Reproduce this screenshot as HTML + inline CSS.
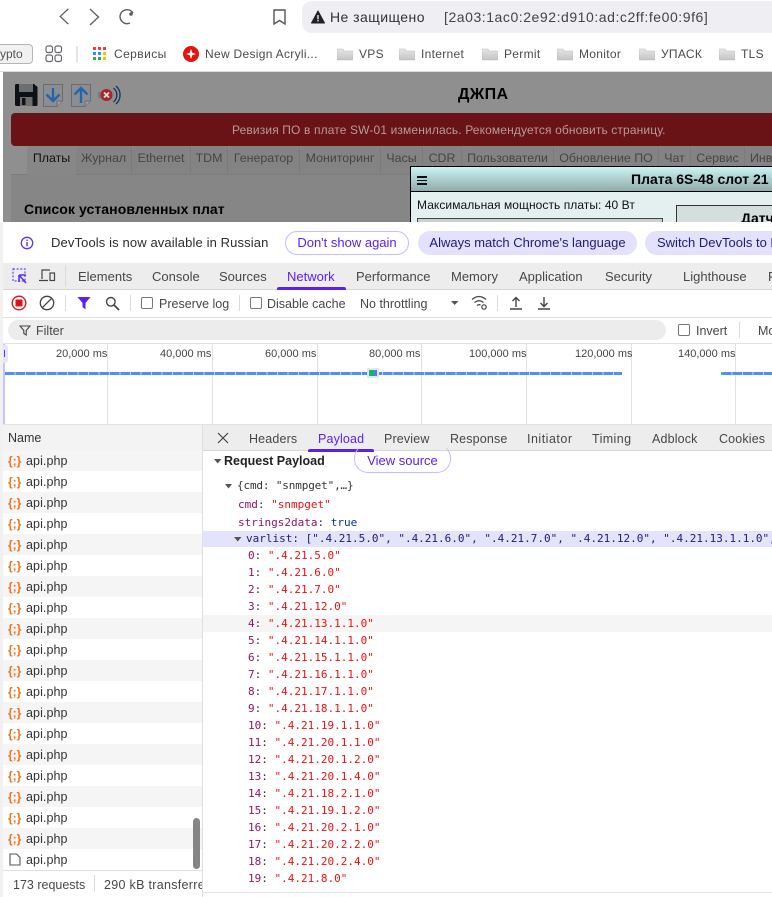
<!DOCTYPE html>
<html><head><meta charset="utf-8">
<style>
html,body{margin:0;padding:0;background:#fff}
body{position:relative;width:772px;height:897px;overflow:hidden;font-family:"Liberation Sans","Noto Sans CJK SC",sans-serif;font-size:12px;color:#333}
div,span,svg{position:absolute}
.t{white-space:nowrap;line-height:16px}
.b{font-size:12px;color:#4a4a4a;letter-spacing:.3px}
.dt{font-size:12.5px;color:#474747}
.dm{font-size:13px;color:#474747}
.dd{font-size:12.5px;color:#474747;letter-spacing:.15px}
.ms{font-size:11px;color:#444}
.tab{top:146px;height:28px;border-right:1px solid #7b7b7b;line-height:25px;color:#454545;text-align:center;background:#838383;border-top-left-radius:3px;font-size:12.4px}
.name{left:26px;font-size:12.5px;color:#333;white-space:nowrap;line-height:16px;letter-spacing:.08px}
.m{font-family:"DejaVu Sans Mono","Liberation Mono",monospace;font-size:11px;white-space:pre;line-height:14px}
.m span{position:static}
.k{color:#94125f}.s{color:#f01010}.c{color:#333}
.row{left:3px;width:199px;height:21px}
.i{left:8px;width:15px;height:12px;color:#f0731b;font-size:12px;font-weight:bold;line-height:12px;white-space:pre}
</style></head><body>

<!-- browser toolbar -->
<svg style="left:55px;top:6px" width="90" height="22" fill="none" stroke="#5f6368" stroke-width="1.4">
<path d="M14 3 L5.5 11 L14 19" transform="scale(.95)"/>
<path d="M35 3 L43.5 11 L35 19"/>
<path d="M78 7 A7 7 0 1 0 75 17" stroke="#5a5a5e"/>
<circle cx="76" cy="8" r="1.8" fill="#5a5a5e" stroke="none"/>
</svg>
<svg style="left:272px;top:8px" width="15" height="18" fill="none" stroke="#55565a" stroke-width="1.4"><path d="M2 2h11v14l-5.5-3.5L2 16z"/></svg>
<div style="left:302px;top:1px;width:480px;height:32px;background:#eeeef3;border-radius:10px 0 0 10px"></div>
<svg style="left:311px;top:10px" width="14" height="14"><path d="M7 1L13.500 13H0.500Z" fill="#222" stroke="#222" stroke-linejoin="round"/><rect x="6.300" y="5" width="1.400" height="4.300" fill="#eee"/><rect x="6.300" y="10" width="1.400" height="1.400" fill="#eee"/></svg>
<div class="t" style="left:330px;top:9px;font-size:14px;color:#333;letter-spacing:.45px">Не защищено</div>
<div class="t" style="left:444px;top:9px;font-size:14px;color:#444;letter-spacing:.55px">[2a03:1ac0:2e92:d910:ad:c2ff:fe00:9f6]</div>

<!-- bookmarks -->
<div style="left:-20px;top:44px;width:51px;height:18px;border:1px solid #b5b5b5;border-radius:4px;background:#f1f1f1"></div>
<div class="t" style="left:0;top:46px;color:#555;font-size:12px;width:22px;text-align:right">ypto</div>
<svg style="left:45px;top:45px" width="18" height="18" fill="none" stroke="#66676b" stroke-width="1.200"><rect x="1" y="1" width="6.500" height="6.500" rx="2"/><rect x="10" y="1" width="6.500" height="6.500" rx="2"/><rect x="1" y="10" width="6.500" height="6.500" rx="2"/><rect x="10" y="10" width="6.500" height="6.500" rx="2"/></svg>
<div style="left:76px;top:46px;width:2px;height:16px;background:#e3e3e8"></div>
<svg style="left:93px;top:47px" width="14" height="14"><rect x="0" y="0" width="3" height="3" fill="#ea4335"/><rect x="5" y="0" width="3" height="3" fill="#ea4335"/><rect x="10" y="0" width="3" height="3" fill="#ea4335"/><rect x="0" y="5" width="3" height="3" fill="#4285f4"/><rect x="5" y="5" width="3" height="3" fill="#4285f4"/><rect x="10" y="5" width="3" height="3" fill="#fbbc04"/><rect x="0" y="10" width="3" height="3" fill="#34a853"/><rect x="5" y="10" width="3" height="3" fill="#34a853"/><rect x="10" y="10" width="3" height="3" fill="#fbbc04"/></svg>
<div class="t b" style="left:114px;top:46px;letter-spacing:.42px">Сервисы</div>
<svg style="left:183px;top:46px" width="16" height="16"><circle cx="8" cy="8" r="8" fill="#e5120f"/><path d="M8 3 L9.300 6.700 L13 8 L9.300 9.300 L8 13 L6.700 9.300 L3 8 L6.700 6.700Z" fill="#fff"/></svg>
<div class="t b" style="left:205px;top:46px">New Design Acryli...</div>
<svg width="0" height="0" style="left:0;top:0"><defs><linearGradient id="fg" x1="0" y1="0" x2="0" y2="1"><stop offset="0" stop-color="#e6e6e6"/><stop offset="1" stop-color="#c4c4c4"/></linearGradient></defs></svg>
<svg style="left:337px;top:47px" width="16" height="14"><path d="M0 2h6l1 2h9v9H0z" fill="url(#fg)" stroke="#bbb" stroke-width=".6"/></svg>
<div class="t b" style="left:359px;top:46px">VPS</div>
<svg style="left:399px;top:47px" width="16" height="14"><path d="M0 2h6l1 2h9v9H0z" fill="url(#fg)" stroke="#bbb" stroke-width=".6"/></svg>
<div class="t b" style="left:421px;top:46px">Internet</div>
<svg style="left:482px;top:47px" width="16" height="14"><path d="M0 2h6l1 2h9v9H0z" fill="url(#fg)" stroke="#bbb" stroke-width=".6"/></svg>
<div class="t b" style="left:504px;top:46px">Permit</div>
<svg style="left:557px;top:47px" width="16" height="14"><path d="M0 2h6l1 2h9v9H0z" fill="url(#fg)" stroke="#bbb" stroke-width=".6"/></svg>
<div class="t b" style="left:579px;top:46px">Monitor</div>
<svg style="left:639px;top:47px" width="16" height="14"><path d="M0 2h6l1 2h9v9H0z" fill="url(#fg)" stroke="#bbb" stroke-width=".6"/></svg>
<div class="t b" style="left:661px;top:46px">УПАСК</div>
<svg style="left:719px;top:47px" width="16" height="14"><path d="M0 2h6l1 2h9v9H0z" fill="url(#fg)" stroke="#bbb" stroke-width=".6"/></svg>
<div class="t b" style="left:741px;top:46px">TLS</div>
<div style="left:0;top:71px;width:772px;height:1px;background:#dcdcdc"></div>

<!-- dimmed page -->
<div style="left:3px;top:72px;width:769px;height:150px;background:#8f8f8f;overflow:hidden"></div>
<svg style="left:15px;top:84px" width="23" height="22"><path d="M0 1.500Q0 0 1.500 0H19L22.500 3V20.500Q22.500 22 21 22H1.500Q0 22 0 20.500Z" fill="#0d1014"/><rect x="4" y="0" width="14" height="8" fill="#6c6f72"/><rect x="5" y="13" width="12.500" height="9" fill="#6e6e6e"/><rect x="7" y="14" width="3.500" height="7" fill="#111"/></svg>
<svg style="left:43px;top:84px" width="20" height="23"><path d="M.5 .5H19.500V17L14 22.500H.5Z" fill="#8a8e94" stroke="#6c6c6c"/><path d="M14 22.500V17H19.500" fill="#9c9c9c" stroke="#6c6c6c"/><path d="M10 4V17M3.500 10.500L10 17L16.500 10.500" fill="none" stroke="#2465a8" stroke-width="2.400"/></svg>
<svg style="left:71px;top:84px" width="20" height="23"><path d="M.5 .5H19.500V17L14 22.500H.5Z" fill="#8a8e94" stroke="#6c6c6c"/><path d="M14 22.500V17H19.500" fill="#9c9c9c" stroke="#6c6c6c"/><path d="M10 19V4M3.500 10.500L10 4L16.500 10.500" fill="none" stroke="#2465a8" stroke-width="2.400"/></svg>
<svg style="left:97px;top:84px" width="24" height="22"><path d="M1 8h4l3-3v12l-3-3H1z" fill="#7a7a7a"/><circle cx="9.500" cy="11" r="6" fill="#a5262b"/><path d="M7 8.500l5 5M12 8.500l-5 5" stroke="#ddd" stroke-width="1.800"/><path d="M16.500 4a9 9 0 0 1 0 14M19 2a12 12 0 0 1 0 18" fill="none" stroke="#17365c" stroke-width="1.300"/></svg>
<div class="t" style="left:458px;top:87px;font-size:16px;font-weight:bold;color:#000;letter-spacing:.4px">ДЖПА</div>
<div style="left:11px;top:113px;width:761px;height:33px;background:#691316;border-radius:4px 0 0 4px"></div>
<div class="t" style="left:232px;top:122px;color:#b69a9b;letter-spacing:.13px">Ревизия ПО в плате SW-01 изменилась. Рекомендуется обновить страницу.</div>

<div style="left:11px;top:174px;width:761px;height:48px;background:#868686;border-top:1px solid #7c7c7c;box-sizing:border-box"></div>
<div class="tab" style="left:27px;width:49px;color:#111;background:#878787;border-right:0;height:29px;z-index:1">Платы</div>
<div class="tab" style="left:76px;width:55px">Журнал</div>
<div class="tab" style="left:132px;width:58px">Ethernet</div>
<div class="tab" style="left:191px;width:36px">TDM</div>
<div class="tab" style="left:228px;width:71px">Генератор</div>
<div class="tab" style="left:300px;width:80px">Мониторинг</div>
<div class="tab" style="left:381px;width:41px">Часы</div>
<div class="tab" style="left:423px;width:38px">CDR</div>
<div class="tab" style="left:462px;width:91px">Пользователи</div>
<div class="tab" style="left:554px;width:104px">Обновление ПО</div>
<div class="tab" style="left:659px;width:31px">Чат</div>
<div class="tab" style="left:691px;width:53px">Сервис</div>
<div class="tab" style="left:745px;width:27px;border:0;text-align:left;padding-left:5px;box-sizing:border-box;overflow:hidden">Инв</div>
<div class="t" style="left:24px;top:201px;font-size:14px;font-weight:bold;color:#000;letter-spacing:.08px">Список установленных плат</div>

<!-- dialog -->
<div style="left:410px;top:166px;width:362px;height:56px;background:#e4f0f0;border:1px solid #000;border-right:0;border-bottom:0;box-sizing:border-box"></div>
<div style="left:411px;top:167px;width:361px;height:24px;background:linear-gradient(#cbf4f3,#8fabaa);border-bottom:1px solid #000"></div>
<div style="left:417px;top:176px;width:9.500px;height:1.500px;background:#111"></div>
<div style="left:417px;top:179.500px;width:9.500px;height:1.500px;background:#111"></div>
<div style="left:417px;top:183px;width:9.500px;height:1.500px;background:#111"></div>
<div class="t" style="left:631px;top:171px;font-size:14px;font-weight:bold;color:#000">Плата 6S-48 слот 21</div>
<div class="t" style="left:417px;top:197px;color:#111;letter-spacing:.06px">Максимальная мощность платы: 40 Вт</div>
<div style="left:417px;top:218px;width:246px;height:4px;background:#c5d0cf;border:1px solid #444;border-bottom:0;box-sizing:border-box"></div>
<div style="left:676px;top:205px;width:96px;height:17px;background:#d4dedd;border:1px solid #333;border-right:0;border-bottom:0;box-sizing:border-box"></div>
<div class="t" style="left:741px;top:210px;font-size:14px;font-weight:bold;color:#000">Датч</div>

<!-- infobar -->
<div style="left:0;top:222px;width:772px;height:41px;background:#fff"></div>
<svg style="left:20px;top:236px" width="14" height="14" fill="none"><circle cx="7" cy="7" r="5.700" stroke="#5b33e8" stroke-width="1.300"/><rect x="6.300" y="6" width="1.400" height="4.300" fill="#5b33e8"/><rect x="6.300" y="3.600" width="1.400" height="1.400" fill="#5b33e8"/></svg>
<div class="t" style="left:51px;top:235px;font-size:13px;color:#2c2c2c;letter-spacing:.12px">DevTools is now available in Russian</div>
<div style="left:285px;top:231px;width:122px;height:22px;border:1px solid #c6bcff;border-radius:12px"></div>
<div class="t" style="left:285px;top:235px;width:124px;text-align:center;font-size:13px;color:#5b20f0">Don't show again</div>
<div style="left:418px;top:231px;width:219px;height:24px;background:#e3e1fd;border-radius:12px"></div>
<div class="t" style="left:418px;top:235px;width:219px;text-align:center;font-size:13px;color:#1f1a78">Always match Chrome's language</div>
<div style="left:645px;top:231px;width:160px;height:24px;background:#e3e1fd;border-radius:12px"></div>
<div class="t" style="left:657px;top:235px;font-size:13px;color:#1f1a78">Switch DevTools to R</div>

<!-- devtools tabs -->
<div style="left:3px;top:263px;width:769px;height:27px;background:#ededee;border-bottom:1px solid #d6d6d6;box-sizing:border-box"></div>
<svg style="left:12px;top:268px" width="16" height="17" fill="none"><rect x="1" y="1" width="12" height="12" stroke="#6a48ea" stroke-width="1.200" stroke-dasharray="2 1.600"/><path d="M7 7h7M7 7v7M7 7l7 8" stroke="#5b33e8" stroke-width="1.600"/></svg>
<svg style="left:39px;top:269px" width="17" height="14" fill="none" stroke="#444" stroke-width="1.200"><path d="M3 10V1H11M0 11.500H9"/><rect x="11" y="4" width="4.500" height="7.500"/></svg>
<div style="left:65px;top:265px;width:1px;height:22px;background:#dadada"></div>
<div class="t dm" style="left:78px;top:269px">Elements</div>
<div class="t dm" style="left:152px;top:269px">Console</div>
<div class="t dm" style="left:219px;top:269px">Sources</div>
<div class="t dm" style="left:287px;top:269px;color:#5b20f0">Network</div>
<div style="left:277px;top:287px;width:69px;height:3px;background:#5b20f0;border-radius:2px 2px 0 0"></div>
<div class="t dm" style="left:356px;top:269px">Performance</div>
<div class="t dm" style="left:451px;top:269px">Memory</div>
<div class="t dm" style="left:519px;top:269px">Application</div>
<div class="t dm" style="left:605px;top:269px">Security</div>
<div class="t dm" style="left:683px;top:269px">Lighthouse</div>
<div class="t dm" style="left:768px;top:269px">R</div>

<!-- network toolbar -->
<svg style="left:11px;top:295px" width="16" height="16" fill="none"><circle cx="8" cy="8" r="6.800" stroke="#e3101a" stroke-width="1.400"/><rect x="4.500" y="4.500" width="7" height="7" rx="1" fill="#e3101a"/></svg>
<svg style="left:39px;top:295px" width="16" height="16" fill="none" stroke="#444" stroke-width="1.300"><circle cx="8" cy="8" r="6.700"/><path d="M3.300 12.700L12.700 3.300"/></svg>
<div style="left:65px;top:295px;width:1px;height:16px;background:#dcdcdc"></div>
<svg style="left:77px;top:296px" width="14" height="14"><path d="M.5 1H13.500L8.500 7V13.500L5.500 11V7Z" fill="#5b20f0"/></svg>
<svg style="left:105px;top:296px" width="15" height="15" fill="none" stroke="#444" stroke-width="1.400"><circle cx="5.800" cy="5.800" r="4.300"/><path d="M9 9l5 5" stroke-width="1.800"/></svg>
<div style="left:130px;top:295px;width:1px;height:16px;background:#dcdcdc"></div>
<div style="left:141px;top:297px;width:12px;height:12px;border:1px solid #777;border-radius:2px;box-sizing:border-box"></div>
<div class="t dt" style="left:159px;top:296px">Preserve log</div>
<div style="left:239px;top:295px;width:1px;height:16px;background:#dcdcdc"></div>
<div style="left:250px;top:297px;width:12px;height:12px;border:1px solid #777;border-radius:2px;box-sizing:border-box"></div>
<div class="t dt" style="left:267px;top:296px">Disable cache</div>
<div class="t dt" style="left:360px;top:296px">No throttling</div>
<svg style="left:450px;top:300px" width="10" height="6"><path d="M1 1H8.500L4.700 5Z" fill="#555"/></svg>
<svg style="left:471px;top:295px" width="18" height="16" fill="none" stroke="#444" stroke-width="1.200"><path d="M1 4.500Q8-1.500 15 4.500M3.500 7.500Q8 4 12.500 7.500M6 10.500Q8 9 9.500 10"/><circle cx="13" cy="12" r="2.200"/></svg>
<div style="left:497px;top:295px;width:1px;height:16px;background:#dcdcdc"></div>
<svg style="left:509px;top:296px" width="14" height="14" fill="none" stroke="#444" stroke-width="1.400"><path d="M7 11V1.500M3.500 5L7 1.500L10.500 5M1 13H13"/></svg>
<svg style="left:537px;top:296px" width="14" height="14" fill="none" stroke="#444" stroke-width="1.400"><path d="M7 1V10.500M3.500 7L7 10.500L10.500 7M1 13H13"/></svg>
<div style="left:3px;top:317px;width:769px;height:1px;background:#e2e2e2"></div>

<!-- filter -->
<div style="left:8px;top:320px;width:658px;height:20px;background:#ececec;border-radius:10px"></div>
<svg style="left:19px;top:325px" width="12" height="11" fill="none" stroke="#444" stroke-width="1.100"><path d="M1 1H11L7.200 5.500V10L4.800 8.500V5.500Z"/></svg>
<div class="t dt" style="left:36px;top:323px">Filter</div>
<div style="left:678px;top:324px;width:12px;height:12px;border:1px solid #777;border-radius:2px;box-sizing:border-box"></div>
<div class="t dt" style="left:696px;top:323px">Invert</div>
<div style="left:739px;top:322px;width:1px;height:16px;background:#dcdcdc"></div>
<div class="t dt" style="left:758px;top:323px">Mo</div>
<div style="left:3px;top:343px;width:769px;height:1px;background:#e2e2e2"></div>

<!-- overview -->
<div style="left:107px;top:344px;width:1px;height:80px;background:#e2e2e2"></div>
<div style="left:212px;top:344px;width:1px;height:80px;background:#e2e2e2"></div>
<div style="left:317px;top:344px;width:1px;height:80px;background:#e2e2e2"></div>
<div style="left:421px;top:344px;width:1px;height:80px;background:#e2e2e2"></div>
<div style="left:526px;top:344px;width:1px;height:80px;background:#e2e2e2"></div>
<div style="left:631px;top:344px;width:1px;height:80px;background:#e2e2e2"></div>
<div style="left:735px;top:344px;width:1px;height:80px;background:#e2e2e2"></div>
<div style="left:3px;top:344px;width:2px;height:80px;background:#c9c4f7"></div>
<div style="left:3px;top:345px;width:5px;height:18px;background:#e6e3fb;border-radius:0 3px 3px 0"></div>
<div style="left:4px;top:350px;width:1px;height:7px;background:#5b33e8"></div>
<div class="t ms" style="left:56px;top:346px">20,000 ms</div>
<div class="t ms" style="left:160px;top:346px">40,000 ms</div>
<div class="t ms" style="left:265px;top:346px">60,000 ms</div>
<div class="t ms" style="left:369px;top:346px">80,000 ms</div>
<div class="t ms" style="left:469px;top:346px">100,000 ms</div>
<div class="t ms" style="left:575px;top:346px">120,000 ms</div>
<div class="t ms" style="left:678px;top:346px">140,000 ms</div>
<div style="left:5px;top:372px;width:617px;height:3px;background:repeating-linear-gradient(90deg,#4f8ff7 0 9.500px,#bcd3fa 9.500px 10.500px)"></div>
<div style="left:722px;top:372px;width:50px;height:3px;background:repeating-linear-gradient(90deg,#4f8ff7 0 9.500px,#bcd3fa 9.500px 10.500px)"></div>
<div style="left:721px;top:372px;width:2px;height:3px;background:#2dd36f"></div>
<div style="left:367px;top:368px;width:12px;height:10px;background:#e3e6fb"></div>
<div style="left:369px;top:370px;width:8px;height:6px;background:#12b76a"></div>
<div style="left:374px;top:370px;width:3px;height:6px;background:#4a80e8"></div>

<!-- name column -->
<div style="left:3px;top:424px;width:199px;height:27px;background:#f3f3f3;border-top:1px solid #e2e2e2;border-bottom:1px solid #dedede;box-sizing:border-box"></div>
<div class="t dt" style="left:8px;top:430px;color:#333">Name</div>
<div class="row" style="top:450px;background:#f5f5f5"></div>
<div class="row" style="top:492px;background:#f5f5f5"></div>
<div class="row" style="top:534px;background:#f5f5f5"></div>
<div class="row" style="top:576px;background:#f5f5f5"></div>
<div class="row" style="top:618px;background:#f5f5f5"></div>
<div class="row" style="top:660px;background:#f5f5f5"></div>
<div class="row" style="top:702px;background:#f5f5f5"></div>
<div class="row" style="top:744px;background:#f5f5f5"></div>
<div class="row" style="top:786px;background:#f5f5f5"></div>
<div class="row" style="top:828px;background:#f5f5f5"></div>

<div class="i" style="top:455px">{;}</div><div class="name" style="top:453px">api.php</div>
<div class="i" style="top:476px">{;}</div><div class="name" style="top:474px">api.php</div>
<div class="i" style="top:497px">{;}</div><div class="name" style="top:495px">api.php</div>
<div class="i" style="top:518px">{;}</div><div class="name" style="top:516px">api.php</div>
<div class="i" style="top:539px">{;}</div><div class="name" style="top:537px">api.php</div>
<div class="i" style="top:560px">{;}</div><div class="name" style="top:558px">api.php</div>
<div class="i" style="top:581px">{;}</div><div class="name" style="top:579px">api.php</div>
<div class="i" style="top:602px">{;}</div><div class="name" style="top:600px">api.php</div>
<div class="i" style="top:623px">{;}</div><div class="name" style="top:621px">api.php</div>
<div class="i" style="top:644px">{;}</div><div class="name" style="top:642px">api.php</div>
<div class="i" style="top:665px">{;}</div><div class="name" style="top:663px">api.php</div>
<div class="i" style="top:686px">{;}</div><div class="name" style="top:684px">api.php</div>
<div class="i" style="top:707px">{;}</div><div class="name" style="top:705px">api.php</div>
<div class="i" style="top:728px">{;}</div><div class="name" style="top:726px">api.php</div>
<div class="i" style="top:749px">{;}</div><div class="name" style="top:747px">api.php</div>
<div class="i" style="top:770px">{;}</div><div class="name" style="top:768px">api.php</div>
<div class="i" style="top:791px">{;}</div><div class="name" style="top:789px">api.php</div>
<div class="i" style="top:812px">{;}</div><div class="name" style="top:810px">api.php</div>
<div class="i" style="top:833px">{;}</div><div class="name" style="top:831px">api.php</div>
<svg style="left:9px;top:853px" width="12" height="13" fill="none" stroke="#555" stroke-width="1.100"><path d="M1 1H7.500L11 4.500V12H1Z"/></svg>
<div class="name" style="top:852px">api.php</div>

<div style="left:193px;top:818px;width:7px;height:51px;background:#858585;border-radius:4px"></div>
<div style="left:3px;top:870px;width:199px;height:1px;background:#e0e0e0"></div>
<div class="t" style="left:13px;top:877px;font-size:12.500px;color:#474747">173 requests</div>
<div style="left:94px;top:875px;width:1px;height:17px;background:#dcdcdc"></div>
<div style="left:104px;top:877px;width:98px;overflow:hidden;font-size:12.500px;color:#474747;white-space:nowrap;line-height:16px;height:16px;letter-spacing:.3px">290 kB transferred</div>
<div style="left:202px;top:424px;width:1px;height:473px;background:#dfdfdf"></div>
<div style="left:0;top:222px;width:3px;height:675px;background:#f1f1f1"></div>

<!-- detail tabs -->
<div style="left:203px;top:424px;width:569px;height:27px;background:#ededee;border-top:1px solid #e2e2e2;border-bottom:1px solid #d6d6d6;box-sizing:border-box"></div>
<svg style="left:217px;top:432px" width="12" height="12" stroke="#444" stroke-width="1.200" fill="none"><path d="M1 1L11 11M11 1L1 11"/></svg>
<div class="t dd" style="left:249px;top:431px">Headers</div>
<div class="t dd" style="left:318px;top:431px;color:#5b20f0">Payload</div>
<div style="left:308px;top:449px;width:66px;height:3px;background:#5b20f0;border-radius:2px 2px 0 0"></div>
<div class="t dd" style="left:384px;top:431px">Preview</div>
<div class="t dd" style="left:450px;top:431px">Response</div>
<div class="t dd" style="left:527px;top:431px;letter-spacing:.5px">Initiator</div>
<div class="t dd" style="left:592px;top:431px;letter-spacing:.4px">Timing</div>
<div class="t dd" style="left:652px;top:431px">Adblock</div>
<div class="t dd" style="left:719px;top:431px">Cookies</div>

<!-- payload -->
<svg style="left:214px;top:459px" width="8" height="5"><path d="M0 0H7.500L3.700 4.500Z" fill="#555"/></svg>
<div class="t" style="left:224px;top:453px;font-size:12.500px;font-weight:bold;color:#222">Request Payload</div>
<div style="left:354px;top:444px;width:95px;height:27px;border:1px solid #c6bcff;border-top-color:transparent;border-radius:14px;background:transparent"></div>
<div class="t" style="left:354px;top:453px;width:97px;text-align:center;font-size:13px;color:#5b20f0">View source</div>
<svg style="left:225px;top:484px" width="7" height="5"><path d="M0 0H7L3.500 4.500Z" fill="#555"/></svg>
<div class="m c" style="left:237px;top:479px;letter-spacing:-.15px">{cmd: "snmpget",…}</div>
<div class="m" style="left:238px;top:498px"><span class="k">cmd</span><span class="c">: </span><span class="s">"snmpget"</span></div>
<div class="m" style="left:238px;top:516px"><span class="k">strings2data</span><span class="c">: </span><span style="color:#0d2d9e">true</span></div>
<div style="left:203px;top:531px;width:569px;height:16px;background:#e3e3fb"></div>
<svg style="left:234px;top:537px" width="8" height="5"><path d="M0 0H7.500L3.700 4.500Z" fill="#555"/></svg>
<div class="m" style="left:246px;top:532px;color:#1f1a78">varlist: [".4.21.5.0", ".4.21.6.0", ".4.21.7.0", ".4.21.12.0", ".4.21.13.1.1.0",</div>
<div style="left:203px;top:615px;width:569px;height:17px;background:#f5f5f5"></div>

<div class="m" style="left:248px;top:549px"><span class="k">0</span><span class="c">: </span><span class="s">".4.21.5.0"</span></div>
<div class="m" style="left:248px;top:566px"><span class="k">1</span><span class="c">: </span><span class="s">".4.21.6.0"</span></div>
<div class="m" style="left:248px;top:583px"><span class="k">2</span><span class="c">: </span><span class="s">".4.21.7.0"</span></div>
<div class="m" style="left:248px;top:600px"><span class="k">3</span><span class="c">: </span><span class="s">".4.21.12.0"</span></div>
<div class="m" style="left:248px;top:617px"><span class="k">4</span><span class="c">: </span><span class="s">".4.21.13.1.1.0"</span></div>
<div class="m" style="left:248px;top:634px"><span class="k">5</span><span class="c">: </span><span class="s">".4.21.14.1.1.0"</span></div>
<div class="m" style="left:248px;top:651px"><span class="k">6</span><span class="c">: </span><span class="s">".4.21.15.1.1.0"</span></div>
<div class="m" style="left:248px;top:668px"><span class="k">7</span><span class="c">: </span><span class="s">".4.21.16.1.1.0"</span></div>
<div class="m" style="left:248px;top:685px"><span class="k">8</span><span class="c">: </span><span class="s">".4.21.17.1.1.0"</span></div>
<div class="m" style="left:248px;top:702px"><span class="k">9</span><span class="c">: </span><span class="s">".4.21.18.1.1.0"</span></div>
<div class="m" style="left:248px;top:719px"><span class="k">10</span><span class="c">: </span><span class="s">".4.21.19.1.1.0"</span></div>
<div class="m" style="left:248px;top:736px"><span class="k">11</span><span class="c">: </span><span class="s">".4.21.20.1.1.0"</span></div>
<div class="m" style="left:248px;top:753px"><span class="k">12</span><span class="c">: </span><span class="s">".4.21.20.1.2.0"</span></div>
<div class="m" style="left:248px;top:770px"><span class="k">13</span><span class="c">: </span><span class="s">".4.21.20.1.4.0"</span></div>
<div class="m" style="left:248px;top:787px"><span class="k">14</span><span class="c">: </span><span class="s">".4.21.18.2.1.0"</span></div>
<div class="m" style="left:248px;top:804px"><span class="k">15</span><span class="c">: </span><span class="s">".4.21.19.1.2.0"</span></div>
<div class="m" style="left:248px;top:821px"><span class="k">16</span><span class="c">: </span><span class="s">".4.21.20.2.1.0"</span></div>
<div class="m" style="left:248px;top:838px"><span class="k">17</span><span class="c">: </span><span class="s">".4.21.20.2.2.0"</span></div>
<div class="m" style="left:248px;top:855px"><span class="k">18</span><span class="c">: </span><span class="s">".4.21.20.2.4.0"</span></div>
<div class="m" style="left:248px;top:872px"><span class="k">19</span><span class="c">: </span><span class="s">".4.21.8.0"</span></div>
<div style="left:203px;top:892px;width:569px;height:1px;background:#e2e2e2"></div>
</body></html>
